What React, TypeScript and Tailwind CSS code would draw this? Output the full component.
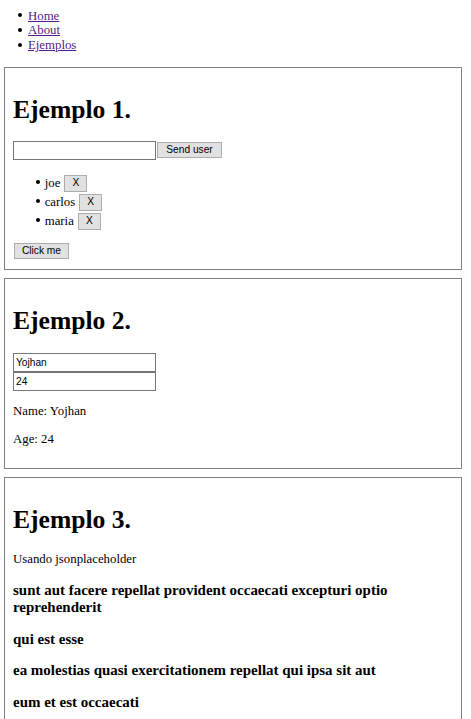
import React from "react";

const btn =
  "bg-[#e1e1e1] border border-[#adadad] text-black font-['Liberation_Sans',Arial,sans-serif] text-[10.2px] leading-none flex items-center justify-center shrink-0";
const inp =
  "bg-white border border-[#767676] text-black font-['Liberation_Sans',Arial,sans-serif] text-[10.2px] leading-none px-[2px] outline-none";

const posts = [
  "sunt aut facere repellat provident occaecati excepturi optio reprehenderit",
  "qui est esse",
  "ea molestias quasi exercitationem repellat qui ipsa sit aut",
  "eum et est occaecati",
];

export default function App() {
  const users = [
    { name: "joe" },
    { name: "carlos" },
    { name: "maria" },
  ];
  return (
    <div className="font-['Liberation_Serif','Times_New_Roman',serif] text-[12.8px] leading-[14.7px] text-black bg-white min-h-screen">
      <ul className="pt-[8.6px] pl-[18px]">
        {["Home", "About", "Ejemplos"].map((l) => (
          <li key={l} className="flex items-center h-[14.7px]">
            <span className="w-[4px] h-[4px] rounded-full bg-black mr-[6px] mb-[1px]" />
            <a href="#" className="text-[#551A8B] underline">
              {l}
            </a>
          </li>
        ))}
      </ul>

      {/* Ejemplo 1 */}
      <div className="mx-[4px] w-[458px] mt-[14.3px] border border-[#808080] px-[8px] pt-[9px] pb-[9.5px]">
        <h1 className="mt-[18px] text-[25.6px] leading-[29.4px] font-bold">Ejemplo 1.</h1>
        <div className="mt-[16.6px] flex items-center gap-[1px] h-[19px]">
          <input className={`${inp} w-[143px] h-[19px]`} />
          <button className={`${btn} w-[65px] h-[16px]`}>Send user</button>
        </div>
        <ul className="mt-[14px] pl-[23px]">
          {users.map((u) => (
            <li key={u.name} className="flex items-center h-[19px]">
              <span className="w-[4px] h-[4px] rounded-full bg-black mr-[4.7px] mb-[2px]" />
              <span>{u.name}</span>
              <button className={`${btn} ml-[4px] w-[23px] h-[17px]`}>X</button>
            </li>
          ))}
        </ul>
        <button className={`${btn} mt-[12px] ml-[1px] w-[55px] h-[16.5px]`}>Click me</button>
      </div>

      {/* Ejemplo 2 */}
      <div className="mx-[4px] w-[458px] mt-[8px] border border-[#808080] px-[8px] pt-[9px] pb-[21.5px]">
        <h1 className="mt-[18px] text-[25.6px] leading-[29.4px] font-bold">Ejemplo 2.</h1>
        <div className="mt-[17.7px] flex flex-col">
          <input className={`${inp} w-[143px] h-[19px]`} defaultValue="Yojhan" />
          <input className={`${inp} w-[143px] h-[19px]`} defaultValue="24" />
        </div>
        <p className="mt-[13px]">Name: Yojhan</p>
        <p className="mt-[13px]">Age: 24</p>
      </div>

      {/* Ejemplo 3 */}
      <div className="mx-[4px] w-[458px] mt-[8px] border border-[#808080] px-[8px] pt-[9px] pb-[60px]">
        <h1 className="mt-[18px] text-[25.6px] leading-[29.4px] font-bold">Ejemplo 3.</h1>
        <p className="mt-[17.5px]">Usando jsonplaceholder</p>
        <div className="mt-[15.5px] flex flex-col gap-[14.3px]">
          {posts.map((p) => (
            <h3 key={p} className="text-[14.98px] leading-[17.2px] font-bold">
              {p}
            </h3>
          ))}
        </div>
      </div>
    </div>
  );
}
